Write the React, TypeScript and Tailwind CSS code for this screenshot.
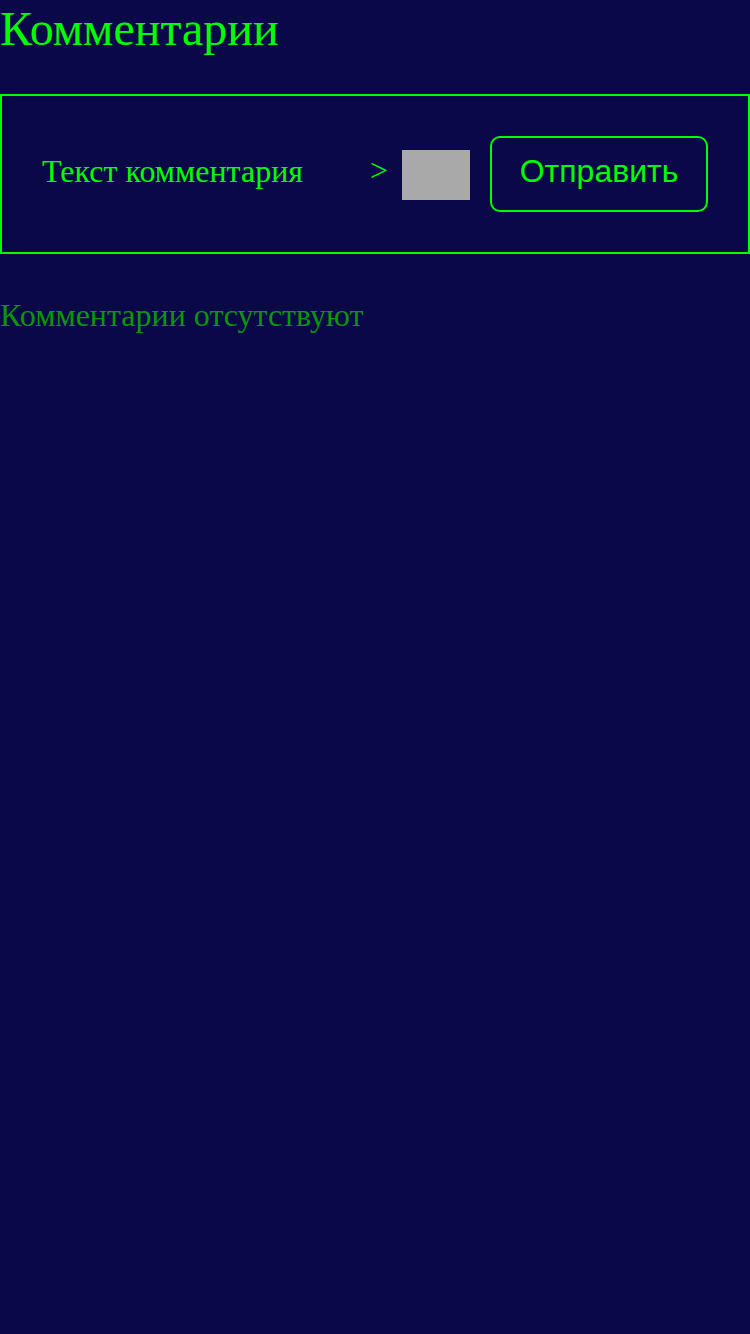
import React from 'react';

export default function App() {
    return (
        <div className="min-h-[1334px] w-full bg-[#0a0848] font-['Liberation_Serif',serif]">
            <h1 className="text-[48px] leading-[58px] text-[#00ff00] font-normal">Комментарии</h1>

            {/* Comment form */}
            <div className="mt-[36px] h-[160px] border-2 border-[#00ff00] flex items-center pl-[40px]">
                <div className="w-[328px] text-[32px] text-[#00ff00] -mt-[6px]">Текст комментария</div>
                <span className="text-[32px] text-[#00ff00] -mt-[8px]">&gt;</span>
                <div className="ml-[14px] mt-[2px] w-[68px] h-[50px] bg-[#a9a9a9]" />
                <button className="ml-[20px] w-[218px] h-[76px] rounded-[10px] border-2 border-[#00ff00] text-[#00ff00] text-[32px] font-['Liberation_Sans',sans-serif] pb-[6px]">
                    Отправить
                </button>
            </div>

            <p className="mt-[40px] text-[32px] leading-[42px] text-[#0a960a]">Комментарии отсутствуют</p>
        </div>
    );
}
